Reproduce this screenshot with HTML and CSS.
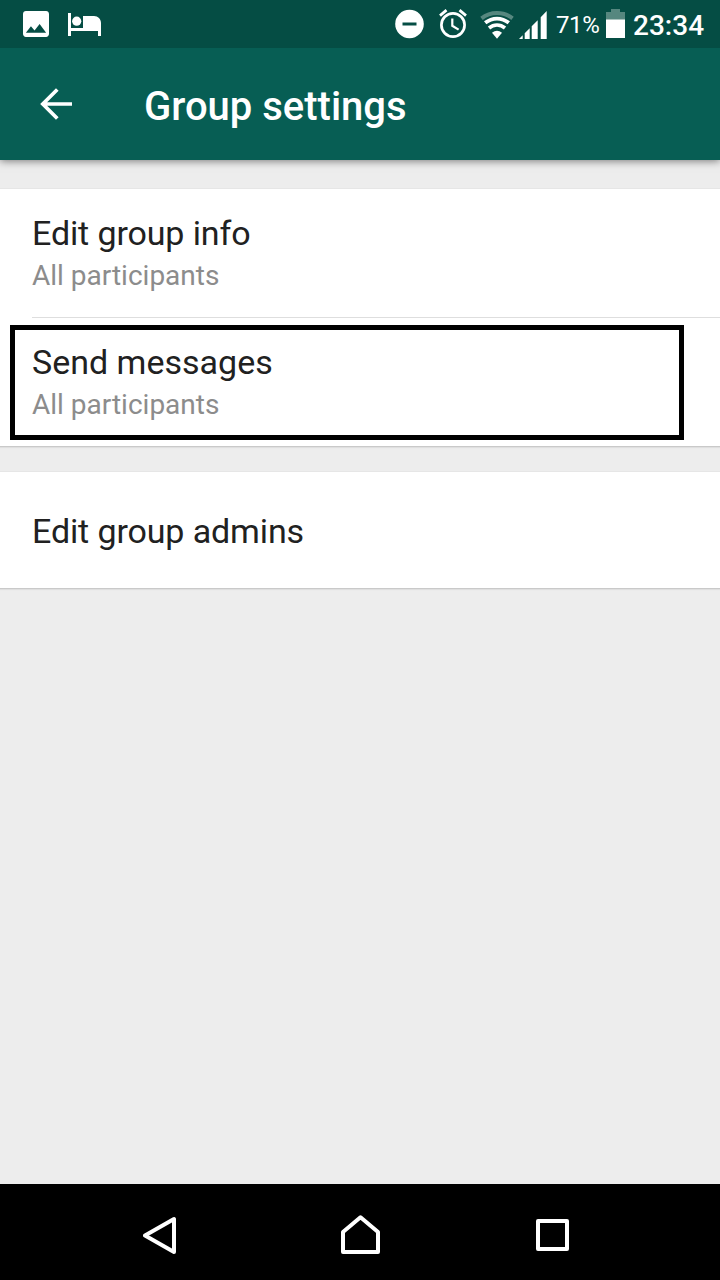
FILE: index.html
```html
<!DOCTYPE html>
<html lang="en">
<head>
<meta charset="utf-8">
<title>Group settings</title>
<link rel="stylesheet" href="styles.css">
</head>
<body>
<div class="screen">
  <div class="status-bar">
    <svg class="icon-image" width="26" height="26" viewBox="3 3 18 18"><path fill="#fff" d="M21 19V5c0-1.100-.9-2-2-2H5c-1.100 0-2 .9-2 2v14c0 1.100.9 2 2 2h14c1.100 0 2-.9 2-2zM8.500 13.500l2.500 3.010L14.500 12l4.500 6H5l3.500-4.500z"/></svg>
    <svg class="icon-bed" width="33" height="23" viewBox="0 0 33 23"><path fill="#fff" d="M0 0h3v15h12V3h11c4 0 7 3 7 7v13h-3v-5H3v5H0z"/><circle cx="8.700" cy="8.200" r="4.600" fill="#fff"/></svg>
    <div class="status-spacer"></div>
    <svg class="icon-dnd" width="29" height="30" viewBox="0 0 29 30"><circle cx="14.500" cy="15" r="14.300" fill="#fff"/><path fill="#054d44" d="M7.500 13.500h14v3h-14z"/></svg>
    <svg class="icon-alarm" width="28" height="29" viewBox="0 0 28 29"><g fill="none" stroke="#fff"><circle cx="14" cy="16" r="11.600" stroke-width="2.700"/><path stroke-width="2.800" d="M1 6.600L7.500 1.200M27 6.600L20.500 1.200"/><path stroke-width="2.200" d="M13.300 9.500v7.300l6.300 3.800"/></g></svg>
    <svg class="icon-wifi" width="34" height="28" viewBox="0 0 34 28"><g fill="none" stroke="#fff"><path stroke="#56877f" stroke-width="4" d="M1.500 7.400C10.500.300 23.500.300 32.500 7.400"/><path stroke-width="3.800" d="M5.200 11.800C12.300 6.100 21.700 6.100 28.800 11.800"/><path stroke-width="3.600" d="M9 17C13.800 13 20.200 13 25 17"/></g><path fill="#fff" d="M12 21.700Q17 17.700 22 21.700L17 27.800z"/></svg>
    <svg class="icon-signal" width="28" height="28" viewBox="0 0 28 28"><path fill="#fff" d="M0 28L3.700 24.300V28zM5.700 28v-5.700l5-5V28zM12.700 28V15.300l6-6V28zM21.700 28V6.300L27.700 0V28z"/></svg>
    <span class="battery-text">71%</span>
    <svg class="icon-battery" width="19" height="29" viewBox="0 0 19 29"><path fill="#56877f" d="M0 3h5V0h9v3h5v8H0z"/><path fill="#fff" d="M0 10.500h19V29H0z"/></svg>
    <span class="clock">23:34</span>
  </div>
  <header class="app-bar">
    <svg class="icon-back" width="32" height="32" viewBox="0 0 32 32"><path fill="none" stroke="#fff" stroke-width="3.700" d="M32 16H3M17.300 1.500L2.800 16l14.500 14.500"/></svg>
    <h1 class="app-title">Group settings</h1>
  </header>
  <main class="content">
    <section class="card">
      <div class="row">
        <div class="row-title tight">Edit group info</div>
        <div class="row-value">All participants</div>
      </div>
      <div class="divider"></div>
      <div class="row highlighted">
        <div class="row-title">Send messages</div>
        <div class="row-value">All participants</div>
      </div>
    </section>
    <section class="card">
      <div class="row row-single">
        <div class="row-title tight">Edit group admins</div>
      </div>
    </section>
  </main>
  <nav class="nav-bar">
    <svg class="nav-back" width="34" height="38" viewBox="0 0 34 38"><path fill="none" stroke="#fff" stroke-width="4" stroke-linejoin="round" d="M31 3v33L2 19.500z"/></svg>
    <svg class="nav-home" width="39" height="39" viewBox="0 0 39 39"><path fill="none" stroke="#fff" stroke-width="4" stroke-linejoin="round" d="M2 37V17L19.500 2.200 37 17v20z"/></svg>
    <svg class="nav-recent" width="33" height="32" viewBox="0 0 33 32"><path fill="none" stroke="#fff" stroke-width="4" stroke-linejoin="round" d="M2 2h29v28H2z"/></svg>
  </nav>
</div>
</body>
</html>
```

FILE: styles.css
```css
body {
  margin: 0;
  font-family: Roboto, "Noto Sans", sans-serif;
  background: #ededed;
}

svg {
  display: block;
  flex: none;
}

.screen {
  display: flex;
  flex-direction: column;
  width: 720px;
  height: 1280px;
  overflow: hidden;
}

.status-bar {
  display: flex;
  align-items: flex-start;
  position: relative;
  z-index: 1;
  box-sizing: border-box;
  height: 48px;
  padding: 9px 0 0 23px;
  background: #054d44;
  color: #fff;
}

.status-spacer { flex: 1; }
.icon-image { margin-top: 2px; }
.icon-bed { margin: 4px 0 0 18.5px; }
.icon-dnd { margin-right: 15.5px; }
.icon-alarm { margin-right: 13px; }
.icon-wifi { margin: 2px 5px 0 0; }
.icon-signal { margin: 2px 9px 0 0; }

.battery-text {
  width: 50px;
  font-size: 24px;
  letter-spacing: -0.4px;
  line-height: 32px;
  white-space: nowrap;
}

.icon-battery { margin-right: 8px; }

.clock {
  width: 87px;
  font-size: 28px;
  font-weight: 500;
  line-height: 33px;
  white-space: nowrap;
}

.app-bar {
  display: flex;
  align-items: center;
  position: relative;
  box-sizing: border-box;
  height: 112px;
  padding-left: 40px;
  background: #075e54;
  color: #fff;
  box-shadow: 0 1px 8px rgba(0, 0, 0, 0.5);
}

.app-title {
  margin: 6px 0 0 72px;
  font-size: 40px;
  font-weight: 500;
  line-height: 48px;
}

.content {
  display: flex;
  flex: 1;
  flex-direction: column;
  gap: 26px;
  padding-top: 29px;
}

.card {
  background: #fff;
  box-shadow: 0 1px 0 #c9c9c9, 0 2px 1px #dfdfdf, 0 -1px 0 #e6e6e6;
}

.row {
  box-sizing: border-box;
  position: relative;
  height: 128px;
  padding: 24px 32px 0;
}

.row-single {
  height: 116px;
  padding-top: 39px;
}

.row-title {
  color: #212121;
  font-size: 34px;
  line-height: 40px;
}

.tight { letter-spacing: -0.12px; }

.row-value {
  margin-top: 6px;
  color: #8c8c8c;
  font-size: 28px;
  line-height: 34px;
}

.divider {
  height: 1px;
  margin-left: 32px;
  background: #dedede;
}

.highlighted::after {
  position: absolute;
  top: 7px;
  right: 36px;
  bottom: 6px;
  left: 10px;
  border: 5px solid #000;
  content: "";
}

.nav-bar {
  display: flex;
  align-items: flex-start;
  box-sizing: border-box;
  height: 96px;
  padding: 31px 0 0 143px;
  background: #000;
}

.nav-back { margin-top: 1px; }
.nav-home { margin-left: 164px; }
.nav-recent { margin: 4px 0 0 156px; }
```
